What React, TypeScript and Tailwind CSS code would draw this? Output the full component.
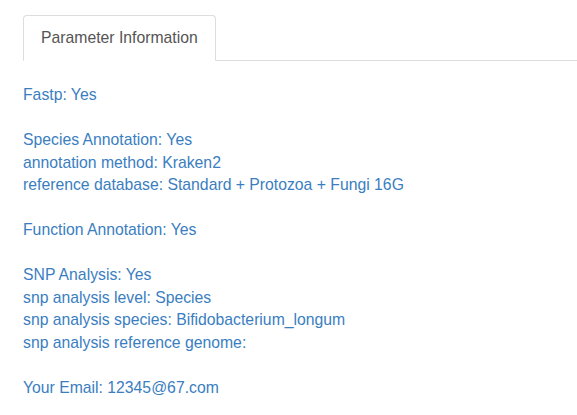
export default function App() {
  const lines = [
    'Fastp: Yes',
    '',
    'Species Annotation: Yes',
    'annotation method: Kraken2',
    'reference database: Standard + Protozoa + Fungi 16G',
    '',
    'Function Annotation: Yes',
    '',
    'SNP Analysis: Yes',
    'snp analysis level: Species',
    'snp analysis species: Bifidobacterium_longum',
    'snp analysis reference genome:',
    '',
    'Your Email: 12345@67.com',
  ]

  return (
    <div className="min-h-[415px] bg-white pl-[23px] pt-[15px] font-['Liberation_Sans',Arial,sans-serif] text-[15.75px]">
      <ul className="flex border-b border-[#dddddd]">
        <li className="-mb-px">
          <span className="block rounded-t border border-[#dddddd] border-b-transparent bg-white px-[17px] py-[11px] leading-[22px] text-[#555555]">
            Parameter Information
          </span>
        </li>
      </ul>
      <div className="pt-[23px] leading-[22.5px] text-[#3a7ebf]">
        {lines.map((l, i) => (
          <div key={i} className="h-[22.5px]">
            {l}
          </div>
        ))}
      </div>
    </div>
  )
}
